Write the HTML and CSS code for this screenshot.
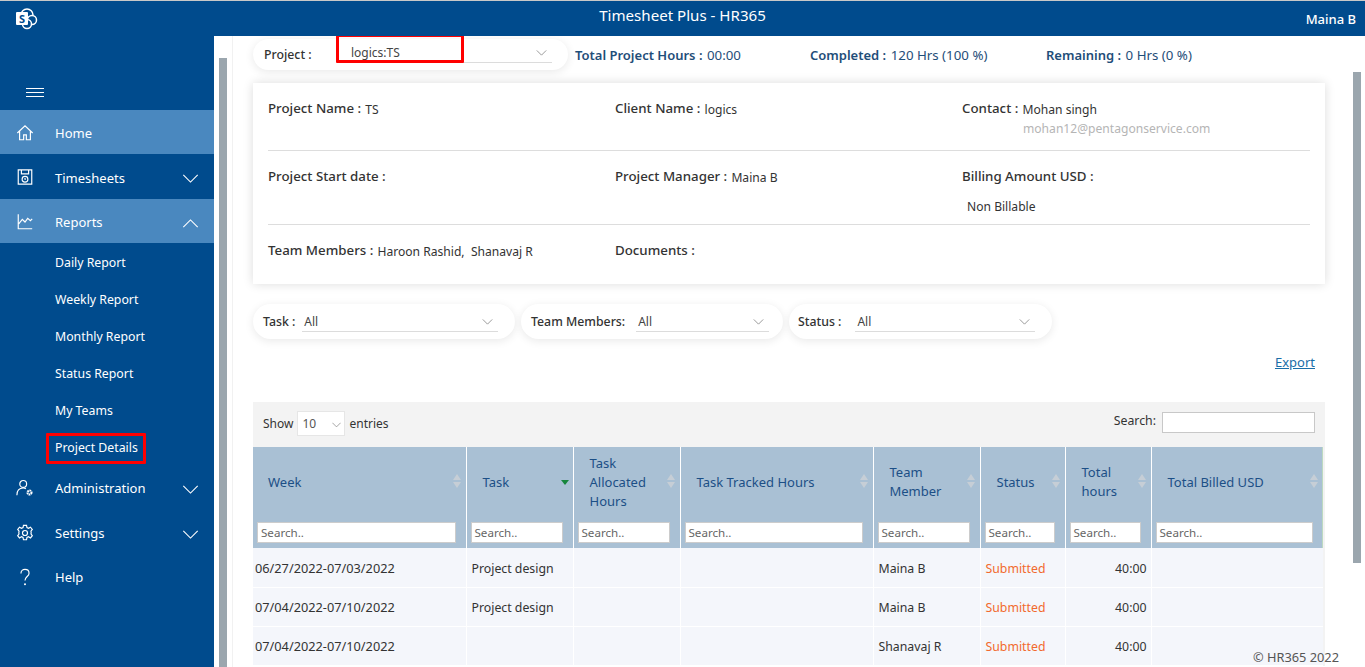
FILE: index.html
```html
<!DOCTYPE html>
<html lang="en">
<head>
<meta charset="utf-8">
<title>Timesheet Plus - HR365</title>
<link rel="stylesheet" href="styles.css">
</head>
<body>
<header class="topbar">
  <svg class="logo" viewBox="0 0 24 22" width="24" height="22"><circle cx="12" cy="7" r="6" fill="none" stroke="#fff" stroke-width="1.5"/><circle cx="17" cy="12" r="4.5" fill="#004b8d" stroke="#fff" stroke-width="1.5"/><circle cx="12" cy="16" r="4.5" fill="#004b8d" stroke="#fff" stroke-width="1.5"/><rect x="1" y="4" width="12" height="13" rx="1" fill="#fff"/><text x="7" y="14.5" class="logo-s">S</text></svg>
  <div class="app-title">Timesheet Plus - HR365</div>
  <div class="user">Maina B</div>
</header>
<div class="shell">
  <nav class="sidebar">
    <div class="burger"><span></span><span></span><span></span></div>
    <a class="nav-item active"><svg class="ico" viewBox="0 0 20 20"><path d="M1.500 10 10 2l8.500 8M4 8v9.500h4.500v-5.500h3v5.500H16V8"/></svg>Home</a>
    <a class="nav-item"><svg class="ico" viewBox="0 0 20 20"><path d="M2.500 2h15v16h-15zM6 2v4.500h8V2"/><circle cx="10" cy="12.500" r="3.200"/><path d="M10 11v1.500h1"/></svg>Timesheets<svg class="chev" viewBox="0 0 18 10"><path d="M1 1l8 8 8-8"/></svg></a>
    <a class="nav-item active"><svg class="ico" viewBox="0 0 20 20"><path d="M2.500 1.500v16h15.500M3 12l4-5 3 3 3-4 3 2.500 2-2"/></svg>Reports<svg class="chev" viewBox="0 0 18 10"><path d="M1 9l8-8 8 8"/></svg></a>
    <div class="submenu">
      <a class="sub-item">Daily Report</a>
      <a class="sub-item">Weekly Report</a>
      <a class="sub-item">Monthly Report</a>
      <a class="sub-item">Status Report</a>
      <a class="sub-item">My Teams</a>
      <a class="sub-item">Project Details<span class="redbox redbox-nav"></span></a>
    </div>
    <a class="nav-item"><svg class="ico" viewBox="0 0 20 20"><circle cx="8" cy="5.500" r="3.800"/><path d="M1 18c0-5 2.500-8 7-8 1.200 0 2 .2 3 .7"/><circle cx="15" cy="15" r="2.200" stroke-width="2.400" stroke-dasharray="1.700 .6"/></svg>Administration<svg class="chev" viewBox="0 0 18 10"><path d="M1 1l8 8 8-8"/></svg></a>
    <a class="nav-item"><svg class="ico" viewBox="0 0 20 20"><circle cx="10" cy="10" r="2.800"/><path d="M8.300 1.500h3.400l.5 2.500 1.700.8 2.200-1.300 2 2.500-1.500 2 .3 2-.3 1 1.500 2-2 2.500-2.200-1.300-1.700.8-.5 2.500H8.300l-.5-2.500-1.700-.8-2.200 1.300-2-2.500 1.500-2-.3-1 .3-2-1.500-2 2-2.500 2.200 1.300 1.700-.8z"/></svg>Settings<svg class="chev" viewBox="0 0 18 10"><path d="M1 1l8 8 8-8"/></svg></a>
    <a class="nav-item"><svg class="ico" viewBox="0 0 20 20"><path d="M5.500 6c0-3 2-4.500 4.500-4.500s4.500 1.500 4.500 4.200c0 3.800-4.500 3.800-4.500 8.300"/><circle cx="10" cy="18" r=".5"/></svg>Help</a>
  </nav>
  <div class="gutter"><div class="thumb thumb-left"></div></div>
  <main class="content">
    <section class="summary">
      <div class="pill pill-project">
        <span class="pill-label project-label">Project :</span>
        <div class="select select-project">logics:TS<svg class="caret" viewBox="0 0 12 7"><path d="M.5.500 6 6 11.500.5"/></svg></div>
        <span class="redbox redbox-project"></span>
      </div>
      <div class="stat stat-total"><b>Total Project Hours :</b> 00:00</div>
      <div class="stat stat-done"><b>Completed :</b> 120 Hrs (100 %)</div>
      <div class="stat stat-left"><b>Remaining :</b> 0 Hrs (0 %)</div>
    </section>

    <section class="card">
      <div class="card-row row-one">
        <div class="field"><b>Project Name :</b> <span class="val">TS</span></div>
        <div class="field"><b>Client Name :</b> <span class="val">logics</span></div>
        <div class="field"><b>Contact :</b> <span class="val">Mohan singh</span><div class="mail">mohan12@pentagonservice.com</div></div>
      </div>
      <div class="card-row row-two">
        <div class="field"><b>Project Start date :</b></div>
        <div class="field"><b>Project Manager :</b> <span class="val">Maina B</span></div>
        <div class="field"><b>Billing Amount USD :</b><div class="billing">Non Billable</div></div>
      </div>
      <div class="card-row row-three">
        <div class="field"><b>Team Members :</b> <span class="val">Haroon Rashid,&nbsp; Shanavaj R</span></div>
        <div class="field"><b>Documents :</b></div>
      </div>
    </section>

    <section class="filters">
      <div class="pill pill-task"><span class="pill-label">Task :</span><div class="select">All<svg class="caret" viewBox="0 0 12 7"><path d="M.5.500 6 6 11.500.5"/></svg></div></div>
      <div class="pill pill-team"><span class="pill-label">Team Members:</span><div class="select">All<svg class="caret" viewBox="0 0 12 7"><path d="M.5.500 6 6 11.500.5"/></svg></div></div>
      <div class="pill pill-status"><span class="pill-label">Status :</span><div class="select">All<svg class="caret" viewBox="0 0 12 7"><path d="M.5.500 6 6 11.500.5"/></svg></div></div>
    </section>

    <div class="export-row"><a class="export">Export</a></div>

    <section class="table-wrap">
      <div class="toolbar">
        <div class="show">Show <span class="page-size">10<svg class="caret-small" viewBox="0 0 12 7"><path d="M.5.500 6 6 11.500.5"/></svg></span> entries</div>
        <div class="search">Search: <span class="search-box"></span></div>
      </div>
      <table class="grid">
        <colgroup><col class="c1"><col class="c2"><col class="c3"><col class="c4"><col class="c5"><col class="c6"><col class="c7"><col class="c8"></colgroup>
        <thead>
          <tr class="head-row">
            <th><span class="th-text">Week</span><i class="sort"></i></th>
            <th><span class="th-text">Task</span><i class="sort-down"></i></th>
            <th><span class="th-text">Task<br>Allocated<br>Hours</span><i class="sort"></i></th>
            <th><span class="th-text">Task Tracked Hours</span><i class="sort"></i></th>
            <th><span class="th-text">Team<br>Member</span><i class="sort"></i></th>
            <th><span class="th-text">Status</span><i class="sort"></i></th>
            <th><span class="th-text">Total<br>hours</span><i class="sort"></i></th>
            <th><span class="th-text">Total Billed USD</span><i class="sort"></i></th>
          </tr>
          <tr class="filter-row">
            <th><span class="col-search">Search..</span></th><th><span class="col-search">Search..</span></th><th><span class="col-search">Search..</span></th><th><span class="col-search">Search..</span></th><th><span class="col-search">Search..</span></th><th><span class="col-search">Search..</span></th><th><span class="col-search">Search..</span></th><th><span class="col-search">Search..</span></th>
          </tr>
        </thead>
        <tbody>
          <tr><td>06/27/2022-07/03/2022</td><td>Project design</td><td></td><td></td><td>Maina B</td><td class="submitted">Submitted</td><td class="num">40:00</td><td></td></tr>
          <tr><td>07/04/2022-07/10/2022</td><td>Project design</td><td></td><td></td><td>Maina B</td><td class="submitted">Submitted</td><td class="num">40:00</td><td></td></tr>
          <tr><td>07/04/2022-07/10/2022</td><td></td><td></td><td></td><td>Shanavaj R</td><td class="submitted">Submitted</td><td class="num">40:00</td><td></td></tr>
        </tbody>
      </table>
    </section>
    <div class="copyright">© HR365 2022</div>
  </main>
  <div class="gutter-right"><div class="thumb thumb-right"></div></div>
</div>
</body>
</html>
```
FILE: styles.css
```css
* { box-sizing: border-box; }
html, body { margin: 0; height: 100%; overflow: hidden; }
body { font-family: "Noto Sans", "Open Sans", sans-serif; font-size: 12.300px; color: #333; background: #fff; }
b { font-weight: 500; }

.topbar { height: 36px; background: #004b8d; color: #fff; display: flex; align-items: center; position: relative; border-top: 1px solid #c8c8c8; }
.logo { margin-left: 15px; }
.logo-s { font-family: "Noto Sans", sans-serif; font-size: 11px; font-weight: 700; fill: #004b8d; text-anchor: middle; }
.app-title { position: absolute; left: 0; right: 0; text-align: center; font-size: 15.100px; top: 4px; }
.user { margin-left: auto; margin-right: 9px; font-size: 13px; font-weight: 500; }

.shell { display: flex; height: 631px; position: relative; }
.sidebar { width: 214px; flex: none; background: #004b8d; color: #fff; padding-top: 52px; }
.burger { height: 22px; margin-left: 26px; display: flex; flex-direction: column; gap: 3px; }
.burger span { display: block; width: 18px; height: 1px; background: #fff; }
.nav-item { display: flex; align-items: center; height: 44.400px; padding-top: 2px; font-size: 13px; position: relative; padding-left: 55px; }
.nav-item.active { background: #4a88bf; }
.ico { position: absolute; left: 16px; top: 14px; width: 18px; height: 18px; fill: none; stroke: #fff; stroke-width: 1.300; }
.chev { position: absolute; left: 182px; top: 20px; width: 17px; height: 9px; fill: none; stroke: #fff; stroke-width: 1.200; }
.sub-item { display: flex; align-items: center; height: 37px; padding-top: 2px; padding-left: 55px; font-size: 12.300px; position: relative; }
.redbox { position: absolute; border: 3px solid #f00; pointer-events: none; border-radius: 1px; }
.redbox-nav { left: 46px; top: 5px; width: 100px; height: 31px; }

.gutter { width: 19px; flex: none; padding: 22px 5px 0; background: #fff; box-shadow: inset -1px 0 0 #f1f1f1; }
.thumb { background: #9ba6ae; }
.thumb-left { width: 8px; height: 100%; }
.content { width: 1120px; flex: none; padding: 3px 0 0 20px; overflow: hidden; position: relative; }
.gutter-right { flex: none; width: 12px; padding-top: 36px; }
.thumb-right { width: 8px; height: 491px; }

.summary { display: flex; align-items: center; height: 31px; }
.pill { background: #fff; border-radius: 18px; box-shadow: 0 2px 10px rgba(0,0,0,.09); display: flex; align-items: center; position: relative; height: 35px; }
.pill-project { width: 315px; height: 31px; padding-left: 11px; }
.pill-label { font-weight: 500; white-space: nowrap; }
.project-label { width: 86px; }
.select { flex: 1; height: 22px; border-bottom: 1px solid #dcdcdc; position: relative; top: -1px; padding-left: 2px; line-height: 24px; font-size: 12px; color: #444; }
.select-project { margin: 0 16px 0 -11px; padding-left: 12px; top: -3px; }
.caret { position: absolute; right: 5px; top: 9px; width: 11px; height: 6px; fill: none; stroke: #8a8a8a; stroke-width: 1; }
.redbox-project { left: 83px; top: -5px; width: 128px; height: 29px; }
.stat { color: #1f4e79; font-size: 13.300px; white-space: nowrap; }
.stat b { font-size: 13px; font-weight: 600; margin-right: 1px; }
.stat-total { margin-left: 7px; width: 235px; }
.stat-done { width: 236px; }

.card { width: 1072px; height: 201px; margin-top: 13px; background: #fff; box-shadow: 0 0 10px rgba(0,0,0,.14); padding: 0 15px; }
.card-row { display: grid; grid-template-columns: 347px 347px 1fr; border-bottom: 1px solid #ddd; padding-top: 16px; }
.row-one { height: 68px; }
.row-two { height: 74px; }
.row-three { border-bottom: 0; }
.field { font-size: 12.100px; line-height: 19px; white-space: nowrap; }
.field b { font-size: 13.300px; font-weight: 500; margin-right: 1px; }
.val { vertical-align: -1px; }
.mail { color: #b5b5b5; padding-left: 61px; }
.billing { padding: 11px 0 0 5px; }

.filters { display: flex; margin-top: 20px; gap: 6px; }
.pill-task { width: 262px; padding-left: 10px; gap: 7px; }
.pill-team { width: 262px; padding-left: 10px; gap: 11px; }
.pill-status { width: 263px; padding-left: 9px; gap: 14px; }
.pill-task .select { margin-right: 17px; }
.pill-team .select { margin-right: 14px; }
.pill-status .select { margin-right: 17px; }

.export-row { width: 1062px; text-align: right; margin-top: 14px; height: 49px; }
.export { color: #1a6ea8; text-decoration: underline; font-size: 13px; }

.table-wrap { width: 1072px; background: #f3f3f3; }
.toolbar { height: 45px; display: flex; justify-content: space-between; padding: 8px 10px 0; }
.show { display: flex; align-items: center; height: 26px; gap: 4px; font-size: 12px; }
.page-size { width: 48px; height: 25px; background: #fff; border: 1px solid #e6e6e6; display: flex; align-items: center; padding-left: 4px; position: relative; color: #555; }
.caret-small { position: absolute; right: 3px; top: 10px; width: 9px; height: 6px; fill: none; stroke: #888; stroke-width: 1; }
.search { display: flex; align-items: flex-start; gap: 6px; padding-top: 2px; }
.search-box { width: 153px; height: 21px; background: #fff; border: 1px solid #c8c8c8; }

.grid { width: 1070px; table-layout: fixed; border-collapse: collapse; background: #f4f6fb; }
.c1 { width: 213px; } .c2 { width: 107px; } .c3 { width: 107px; } .c4 { width: 193px; }
.c5 { width: 107px; } .c6 { width: 85px; } .c7 { width: 86px; } .c8 { width: 172px; }
.grid th { background: #a9c0d4; font-weight: 400; border-left: 1px solid #fff; text-align: left; padding: 0; position: relative; }
.grid th:first-child { border-left: 0; }
.grid th:last-child { box-shadow: inset -1px 0 0 #bcd9c0; }
.head-row th { height: 75px; padding: 0 0 5px 16px; color: #1c4f86; font-size: 13px; line-height: 19px; }
.head-row th:first-child { padding-left: 15px; }
.filter-row th { height: 26px; padding: 0 4px; vertical-align: top; }
.col-search { display: block; height: 21px; background: #fff; border: 1px solid #ccc; font-size: 11.600px; color: #666; line-height: 19px; padding-left: 3px; width: calc(100% - 6px); }
.sort { position: absolute; right: 5px; top: 27px; width: 0; height: 15px; }
.sort::before { content: ""; position: absolute; right: 0; top: 0; border: 4.500px solid transparent; border-top: 0; border-bottom: 6.500px solid #c6ced6; }
.sort::after { content: ""; position: absolute; right: 0; top: 8px; border: 4.500px solid transparent; border-bottom: 0; border-top: 6.500px solid #c6ced6; }
.sort-down { position: absolute; right: 4px; top: 33px; border: 4.500px solid transparent; border-bottom: 0; border-top: 5px solid #17863d; }
.grid td { height: 39px; padding: 3px 5px 0 5px; border-left: 1px solid #fff; border-bottom: 1px solid #fff; white-space: nowrap; line-height: 18px; }
.grid td:first-child { padding: 1px 5px 0 2px; border-left: 0; font-size: 12.750px; }
.grid td.submitted { color: #f26a2e; }
.grid td.num { text-align: right; padding-right: 4px; }
.copyright { position: absolute; left: 1020px; top: 612px; font-size: 12.800px; color: #555; }
```
